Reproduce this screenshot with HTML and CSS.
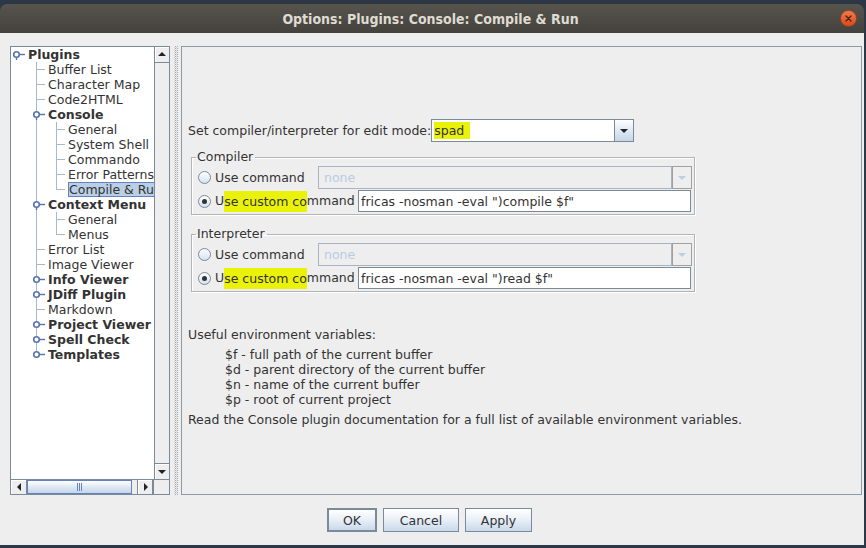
FILE: index.html
```html
<!DOCTYPE html>
<html>
<head>
<meta charset="utf-8">
<link rel="stylesheet" href="styles.css">
</head>
<body>
<div class="window">
  <div class="titlebar">
    <span class="title">Options: Plugins: Console: Compile &amp; Run</span>
    <span class="close">
      <svg width="17" height="17" viewBox="0 0 17 17">
        <defs><linearGradient id="cg" x1="0" y1="0" x2="0" y2="1"><stop offset="0" stop-color="#f47b4c"/><stop offset="1" stop-color="#d9481a"/></linearGradient></defs>
        <circle cx="8.5" cy="8.5" r="8" fill="url(#cg)" stroke="#8a3a1a" stroke-width="0.6"/>
        <path d="M6 6 L11 11 M11 6 L6 11" stroke="#4a2010" stroke-width="1.3" stroke-linecap="round"/>
      </svg>
    </span>
  </div>
  <div class="body">
    <div class="main">
      <div class="tree">
        <div class="tree-top">
          <div class="tree-view">
            <div class="row"><span class="c"><svg width="20" height="15"><line x1="11" y1="7.5" x2="17" y2="7.5" class="kl"/><circle cx="8.5" cy="7.5" r="2.8" class="kc"/><line x1="8.5" y1="10.3" x2="8.5" y2="13" class="kl"/></svg></span><span class="lbl b">Plugins</span></div>
            <div class="row"><span class="c"></span><span class="c t"></span><span class="lbl">Buffer List</span></div>
            <div class="row"><span class="c"></span><span class="c t"></span><span class="lbl">Character Map</span></div>
            <div class="row"><span class="c"></span><span class="c t"></span><span class="lbl">Code2HTML</span></div>
            <div class="row"><span class="c"></span><span class="c v"><svg width="20" height="15"><line x1="11" y1="7.5" x2="17" y2="7.5" class="kl"/><circle cx="8.5" cy="7.5" r="2.8" class="kc"/><line x1="8.5" y1="10.3" x2="8.5" y2="13" class="kl"/></svg></span><span class="lbl b">Console</span></div>
            <div class="row"><span class="c"></span><span class="c v"></span><span class="c t"></span><span class="lbl">General</span></div>
            <div class="row"><span class="c"></span><span class="c v"></span><span class="c t"></span><span class="lbl">System Shell</span></div>
            <div class="row"><span class="c"></span><span class="c v"></span><span class="c t"></span><span class="lbl">Commando</span></div>
            <div class="row"><span class="c"></span><span class="c v"></span><span class="c t"></span><span class="lbl">Error Patterns</span></div>
            <div class="row"><span class="c"></span><span class="c v"></span><span class="c l"></span><span class="lbl sel">Compile &amp; Run</span></div>
            <div class="row"><span class="c"></span><span class="c v"><svg width="20" height="15"><line x1="11" y1="7.5" x2="17" y2="7.5" class="kl"/><circle cx="8.5" cy="7.5" r="2.8" class="kc"/><line x1="8.5" y1="10.3" x2="8.5" y2="13" class="kl"/></svg></span><span class="lbl b">Context Menu</span></div>
            <div class="row"><span class="c"></span><span class="c v"></span><span class="c t"></span><span class="lbl">General</span></div>
            <div class="row"><span class="c"></span><span class="c v"></span><span class="c l"></span><span class="lbl">Menus</span></div>
            <div class="row"><span class="c"></span><span class="c t"></span><span class="lbl">Error List</span></div>
            <div class="row"><span class="c"></span><span class="c t"></span><span class="lbl">Image Viewer</span></div>
            <div class="row"><span class="c"></span><span class="c v"><svg width="20" height="15"><line x1="11" y1="7.5" x2="17" y2="7.5" class="kl"/><circle cx="8.5" cy="7.5" r="2.8" class="kc"/></svg></span><span class="lbl b">Info Viewer</span></div>
            <div class="row"><span class="c"></span><span class="c v"><svg width="20" height="15"><line x1="11" y1="7.5" x2="17" y2="7.5" class="kl"/><circle cx="8.5" cy="7.5" r="2.8" class="kc"/></svg></span><span class="lbl b">JDiff Plugin</span></div>
            <div class="row"><span class="c"></span><span class="c t"></span><span class="lbl">Markdown</span></div>
            <div class="row"><span class="c"></span><span class="c v"><svg width="20" height="15"><line x1="11" y1="7.5" x2="17" y2="7.5" class="kl"/><circle cx="8.5" cy="7.5" r="2.8" class="kc"/></svg></span><span class="lbl b">Project Viewer</span></div>
            <div class="row"><span class="c"></span><span class="c v"><svg width="20" height="15"><line x1="11" y1="7.5" x2="17" y2="7.5" class="kl"/><circle cx="8.5" cy="7.5" r="2.8" class="kc"/></svg></span><span class="lbl b">Spell Check</span></div>
            <div class="row"><span class="c"></span><span class="c vh"><svg width="20" height="15"><line x1="11" y1="7.5" x2="17" y2="7.5" class="kl"/><circle cx="8.5" cy="7.5" r="2.8" class="kc"/></svg></span><span class="lbl b">Templates</span></div>
          </div>
          <div class="vscroll">
            <div class="sbtn"><svg width="14" height="15"><path d="M3 9 L11 9 L7 5 Z" fill="#222"/></svg></div>
            <div class="vtrack"></div>
            <div class="sbtn dn"><svg width="14" height="15"><path d="M3 6 L11 6 L7 10 Z" fill="#222"/></svg></div>
          </div>
        </div>
        <div class="hscroll">
          <div class="sbtn h"><svg width="16" height="14"><path d="M10 3 L10 11 L6 7 Z" fill="#222"/></svg></div>
          <div class="thumb"><span class="grip"></span></div>
          <div class="htrack"></div>
          <div class="sbtn h"><svg width="16" height="14"><path d="M6 3 L6 11 L10 7 Z" fill="#222"/></svg></div>
          <div class="corner"></div>
        </div>
      </div>
      <div class="splitter"></div>
      <div class="panel">
        <div class="moderow">
          <span>Set compiler/interpreter for edit mode:</span>
          <div class="combo">
            <div class="cfield"><span class="hl">spad</span></div>
            <div class="cbtn"><svg width="17" height="21"><path d="M4 9 L12 9 L8 13 Z" fill="#222"/></svg></div>
          </div>
        </div>
        <fieldset class="group">
          <legend>Compiler</legend>
          <div class="grow">
            <span class="opt o1"><span class="radio"></span>Use command</span>
            <div class="combo dis">
              <div class="cfield">none</div>
              <div class="cbtn"><svg width="17" height="21"><path d="M4 9 L12 9 L8 13 Z" fill="#b8cfe5"/></svg></div>
            </div>
          </div>
          <div class="grow">
            <span class="opt o2"><span class="radio on"></span>U<span class="hl">se custom co</span>mmand</span>
            <div class="tfield">fricas -nosman -eval ")compile $f"</div>
          </div>
        </fieldset>
        <fieldset class="group g2">
          <legend>Interpreter</legend>
          <div class="grow">
            <span class="opt o1"><span class="radio"></span>Use command</span>
            <div class="combo dis">
              <div class="cfield">none</div>
              <div class="cbtn"><svg width="17" height="21"><path d="M4 9 L12 9 L8 13 Z" fill="#b8cfe5"/></svg></div>
            </div>
          </div>
          <div class="grow">
            <span class="opt o2"><span class="radio on"></span>U<span class="hl">se custom co</span>mmand</span>
            <div class="tfield">fricas -nosman -eval ")read $f"</div>
          </div>
        </fieldset>
        <div class="help">
          <p>Useful environment variables:</p>
          <ul>
            <li>$f - full path of the current buffer</li>
            <li>$d - parent directory of the current buffer</li>
            <li>$n - name of the current buffer</li>
            <li>$p - root of current project</li>
          </ul>
          <p>Read the Console plugin documentation for a full list of available environment variables.</p>
        </div>
      </div>
    </div>
    <div class="buttons">
      <button class="btn ok">OK</button>
      <button class="btn cancel">Cancel</button>
      <button class="btn apply">Apply</button>
    </div>
  </div>
</div>
</body>
</html>
```
FILE: styles.css
```css
* { box-sizing: border-box; }
body {
  margin: 0;
  background: #2e3745;
  font-family: "DejaVu Sans", sans-serif;
  font-size: 12.5px;
  color: #333;
  overflow: hidden;
}
.window { width: 864px; margin-top: 4px; }
.titlebar {
  height: 29px;
  background: linear-gradient(#57544e, #44423d);
  border-radius: 7px 7px 0 0;
  display: grid;
  grid-template-columns: 1fr auto 1fr;
  align-items: center;
  padding: 0 7px 0 8px;
}
.title {
  grid-column: 2;
  color: #dfdbd2;
  font-weight: bold;
  font-size: 14px;
  font-family: "DejaVu Sans Condensed", "DejaVu Sans", sans-serif;
  font-stretch: condensed;
  padding-right: 4px;
}
.close { grid-column: 3; justify-self: end; height: 17px; display: flex; }
.body { background: #eeeeee; height: 512px; }
.main { display: flex; padding: 13px 2px 0 10px; height: 462px; }

/* tree */
.tree {
  width: 160px;
  height: 449px;
  border: 1px solid #7a8a99;
  display: flex;
  flex-direction: column;
  background: #fff;
}
.tree-top { display: flex; height: 432px; }
.tree-view { width: 143px; overflow: hidden; }
.row { display: flex; height: 15px; line-height: 16px; margin-left: -3px; white-space: nowrap; }
.c { flex: none; width: 20px; height: 15px; display: block; }
.c svg { display: block; }
.v { background: linear-gradient(#a6b9cf, #a6b9cf) 8px 0 / 1px 100% no-repeat; }
.vh { background: linear-gradient(#a6b9cf, #a6b9cf) 8px 0 / 1px 7px no-repeat; }
.t {
  background:
    linear-gradient(#a6b9cf, #a6b9cf) 8px 0 / 1px 100% no-repeat,
    linear-gradient(#a6b9cf, #a6b9cf) 9px 7px / 8px 1px no-repeat;
}
.l {
  background:
    linear-gradient(#a6b9cf, #a6b9cf) 8px 0 / 1px 8px no-repeat,
    linear-gradient(#a6b9cf, #a6b9cf) 9px 7px / 8px 1px no-repeat;
}
.kc { fill: #fff; stroke: #5674ad; stroke-width: 1.6; }
.kl { stroke: #5674ad; stroke-width: 1.4; }
.lbl { padding: 0; color: #333; }
.lbl.b { font-weight: bold; }
.lbl.sel {
  background: #b8cfe5;
  border: 1px solid #6382bf;
  line-height: 14px;
  padding: 0;
  flex: none;
  width: 100px;
}

.vscroll {
  width: 15px;
  border-left: 1px solid #7a8a99;
  background: #eeeeee;
  display: flex;
  flex-direction: column;
}
.sbtn {
  height: 16px;
  background: #eeeeee;
  border-bottom: 1px solid #7a8a99;
  box-shadow: inset 1px 1px 0 #fff;
  display: flex;
  align-items: center;
  justify-content: center;
}
.sbtn.dn { border-top: 1px solid #7a8a99; border-bottom: none; }
.vtrack { flex: 1; background: #eeeeee; }
.hscroll {
  height: 15px;
  border-top: 1px solid #7a8a99;
  background: #eeeeee;
  display: flex;
}
.sbtn.h {
  width: 16px;
  height: 14px;
  border-bottom: none;
  border-right: 1px solid #7a8a99;
}
.hscroll .sbtn.h:nth-child(4) { border-left: 1px solid #7a8a99; }
.thumb {
  width: 105px;
  border: 1px solid #6382bf;
  background: linear-gradient(#ffffff, #dce7f2 55%, #c4d6e9);
  display: flex;
  align-items: center;
  justify-content: center;
}
.grip {
  width: 5px;
  height: 8px;
  background: repeating-linear-gradient(90deg, #6382bf 0 1px, transparent 1px 2px);
}
.htrack { width: 5px; }
.corner { flex: 1; border-left: 1px solid #7a8a99; }

.splitter {
  width: 11px;
  background: conic-gradient(#a8a8a8 25%, transparent 0 50%, #d0d0d0 0 75%, transparent 0) 4px 0 / 2px 2px;
  background-clip: content-box;
  padding: 0 3px 0 4px;
}

/* right panel */
.panel {
  flex: 1;
  height: 449px;
  border: 1px solid #8c9aa8;
  padding: 72px 0 0 6px;
}
.moderow { display: flex; align-items: center; height: 23px; }
.combo { display: flex; height: 23px; width: 203px; }
.cfield {
  flex: 1;
  border: 1px solid #7a8a99;
  background: #fff;
  line-height: 21px;
  padding-left: 2px;
}
.cbtn {
  width: 19px;
  border: 1px solid #7a8a99;
  border-left: none;
  background: linear-gradient(#ffffff, #dce7f2 55%, #c4d6e9);
  display: flex;
  align-items: center;
  justify-content: center;
}
.hl { background: #eaf20a; }
.combo .hl { padding: 1px 6px 1px 0; }
.combo.dis { width: 374px; margin-right: 2px; }
.combo.dis .cfield { background: #eeeeee; border-color: #a7b4c2; color: #b8cce2; padding-left: 5px; }
.combo.dis .cbtn { background: #eeeeee; border: 1px solid #a0a0a0; width: 20px; }

.group {
  margin: 7px 0 0 3px;
  width: 504px;
  border: 1px solid #b4b4b4;
  box-shadow: 1px 1px 0 #fff, inset 1px 1px 0 #fff;
  padding: 1px 0 2px 0;
}
.group.g2 { margin-top: 11px; }
.group legend {
  margin-left: 4px;
  padding: 0 2px 0 1px;
  line-height: 16px;
}
.grow { display: flex; align-items: center; height: 23px; line-height: 16px; }
.grow + .grow { height: 22px; margin-top: 1px; }
.opt { display: flex; align-items: center; flex: none; padding-left: 6px; }
.opt.o1 { width: 126px; }
.opt.o2 { width: 166px; }
.radio {
  width: 13px;
  height: 13px;
  border-radius: 50%;
  border: 1px solid #7a8a99;
  background: linear-gradient(#ffffff, #d4e2ef);
  margin-right: 4px;
  display: flex;
  align-items: center;
  justify-content: center;
}
.radio.on::after {
  content: "";
  width: 5px;
  height: 5px;
  border-radius: 50%;
  background: #333;
}
.opt .hl { padding: 3px 0 2px; }
.tfield {
  width: 333px;
  height: 22px;
  border: 1px solid #7a8a99;
  background: #fff;
  line-height: 21px;
  padding-left: 2px;
  color: #333;
  white-space: nowrap;
}

.help { margin-top: 35px; line-height: 15px; }
.help p { margin: 0; }
.help ul { list-style: none; margin: 5px 0 5px 0; padding-left: 37px; }

.buttons { display: flex; justify-content: center; gap: 6px; margin-top: 13px; padding-right: 5px; }
.btn {
  height: 24px;
  font-family: "DejaVu Sans", sans-serif;
  font-size: 12.5px;
  color: #333;
  border: 1px solid #7a8a99;
  background: linear-gradient(#ffffff, #e8eff7 50%, #c8d9ea);
  padding: 0;
}
.btn.ok { width: 50px; border: 2px solid #7a8a99; }
.btn.cancel { width: 76px; }
.btn.apply { width: 67px; }
```
